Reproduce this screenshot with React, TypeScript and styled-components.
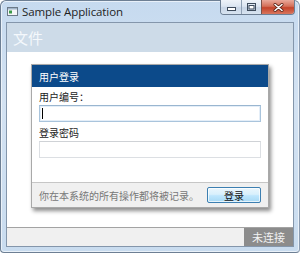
import * as React from 'react';
import styled, { createGlobalStyle } from 'styled-components';

const GlobalStyle = createGlobalStyle`
  html, body {
    margin: 0;
    padding: 0;
    width: 300px;
    height: 253px;
    overflow: hidden;
    background: #ffffff;
  }
  * {
    box-sizing: border-box;
  }
`;

const cjk = `"Noto Sans CJK SC", "Noto Sans", sans-serif`;

const Window = styled.div`
  width: 300px;
  height: 253px;
  display: flex;
  flex-direction: column;
  background: linear-gradient(180deg, #c6daef 0%, #d3e2f2 40%, #c9dcef 100%);
  border: 1px solid #6d7f94;
  border-right-color: #8a9bb0;
  border-radius: 6px 6px 4px 4px;
  box-shadow: inset 0 0 0 1px rgba(255, 255, 255, 0.6);
`;

const TitleBar = styled.div`
  height: 20px;
  flex-shrink: 0;
  display: flex;
  align-items: flex-start;
  padding-left: 6px;
  padding-right: 4px;
`;

const TitleLeft = styled.div`
  display: flex;
  align-items: center;
  gap: 4px;
  height: 20px;
  flex: 1;
`;

const Title = styled.span`
  font-family: "Open Sans", "Liberation Sans", sans-serif;
  font-size: 11.5px;
  color: #1e1e1e;
  letter-spacing: -0.1px;
`;

const Controls = styled.div`
  display: flex;
  height: 15px;
  border: 1px solid #6d7f94;
  border-top: none;
  border-radius: 0 0 4px 4px;
  overflow: hidden;
  margin-top: -1px;
`;

const CtrlButton = styled.div<{ $wide?: boolean; $close?: boolean }>`
  width: ${(p) => (p.$wide ? 33 : 20)}px;
  height: 100%;
  display: flex;
  align-items: center;
  justify-content: center;
  background: ${(p) =>
    p.$close
      ? 'linear-gradient(180deg, #e9a99b 0%, #d46f58 45%, #c4432a 55%, #d8765e 100%)'
      : 'linear-gradient(180deg, #eef3f9 0%, #dbe5f1 45%, #c7d5e6 55%, #d8e4f1 100%)'};
  border-left: ${(p) => (p.$wide ? '1px solid #7a5048' : '1px solid #8fa0b4')};
  &:first-child {
    border-left: none;
  }
`;

const Client = styled.div`
  flex: 1;
  margin: 1px 5px 5px 5px;
  border: 1px solid #8496ab;
  display: flex;
  flex-direction: column;
  background: #ffffff;
`;

const MenuBar = styled.div`
  height: 29px;
  flex-shrink: 0;
  background: #cddbe8;
  display: flex;
  align-items: center;
  padding-left: 6px;
  font-family: ${cjk};
  font-size: 15px;
  color: #f4f8fc;
`;

const Content = styled.div`
  flex: 1;
  display: flex;
  justify-content: center;
  align-items: flex-start;
  padding-top: 12px;
  background: #ffffff;
`;

const Dialog = styled.div`
  width: 238px;
  display: flex;
  flex-direction: column;
  background: #ffffff;
  border: 1px solid #a9a9a9;
  box-shadow: 2px 3px 4px rgba(0, 0, 0, 0.45);
`;

const DialogHeader = styled.div`
  height: 22px;
  background: #0c4a8a;
  display: flex;
  align-items: center;
  padding-left: 7px;
  font-family: ${cjk};
  font-size: 10px;
  color: #ffffff;
`;

const DialogBody = styled.div`
  display: flex;
  flex-direction: column;
  padding: 2px 7px 24px 7px;
`;

const Label = styled.div<{ $gap?: number }>`
  font-family: ${cjk};
  font-size: 10px;
  color: #1a1a1a;
  height: 16px;
  line-height: 16px;
  margin-top: ${(p) => p.$gap ?? 0}px;
`;

const Input = styled.div<{ $focused?: boolean }>`
  height: 17px;
  border: 1px solid ${(p) => (p.$focused ? '#a9c4dc' : '#dcdfe3')};
  border-top-color: ${(p) => (p.$focused ? '#9ab6d0' : '#cfd2d6')};
  box-shadow: ${(p) => (p.$focused ? 'inset 0 0 0 1px #e4eef8' : 'none')};
  display: flex;
  align-items: center;
  padding-left: 2px;
`;

const Caret = styled.span`
  width: 1px;
  height: 11px;
  background: #000000;
`;

const DialogFooter = styled.div`
  height: 25px;
  border-top: 1px solid #c6c6c6;
  background: #f0f0f0;
  display: flex;
  align-items: center;
  justify-content: space-between;
  padding: 0 7px;
`;

const Notice = styled.span`
  font-family: ${cjk};
  font-size: 10px;
  color: #777777;
`;

const LoginButton = styled.div`
  width: 54px;
  height: 16px;
  border: 1px solid #3c7fb1;
  border-radius: 2px;
  background: linear-gradient(180deg, #eaf6fd 0%, #d9f0fc 45%, #bee6fd 55%, #a7d9f5 100%);
  box-shadow: inset 0 0 0 1px rgba(255, 255, 255, 0.7);
  display: flex;
  align-items: center;
  justify-content: center;
  font-family: ${cjk};
  font-size: 10px;
  color: #111111;
`;

const StatusBar = styled.div`
  height: 19px;
  flex-shrink: 0;
  border-top: 1px solid #a3a3a3;
  background: #f0f0f0;
  display: flex;
  justify-content: flex-end;
`;

const Status = styled.div`
  width: 49px;
  background: #8c8c8c;
  display: flex;
  align-items: center;
  justify-content: center;
  font-family: ${cjk};
  font-size: 11px;
  color: #f2f2f2;
`;

function AppIcon() {
  return (
    <svg width="11" height="9" viewBox="0 0 11 9">
      <rect x="0.5" y="0.5" width="10" height="8" fill="#f4f6f8" stroke="#6b7a88" />
      <rect x="1" y="1" width="9" height="1.5" fill="#9fb3c8" />
      <rect x="2" y="3.5" width="3" height="3" fill="#3c9a4a" />
    </svg>
  );
}

function MinIcon() {
  return (
    <svg width="9" height="8" viewBox="0 0 9 8">
      <rect x="0.5" y="4.5" width="8" height="3" fill="#ffffff" stroke="#3d4b5c" />
    </svg>
  );
}

function MaxIcon() {
  return (
    <svg width="9" height="8" viewBox="0 0 9 8">
      <rect x="0.5" y="0.5" width="8" height="7" fill="none" stroke="#3d4b5c" />
      <rect x="2" y="2.5" width="5" height="3.5" fill="#ffffff" stroke="#3d4b5c" strokeWidth="1" />
    </svg>
  );
}

function CloseIcon() {
  return (
    <svg width="11" height="9" viewBox="0 0 11 9">
      <path d="M2 1.5 L9 7.5 M9 1.5 L2 7.5" stroke="#5a2418" strokeWidth="3" strokeLinecap="round" />
      <path d="M2 1.5 L9 7.5 M9 1.5 L2 7.5" stroke="#ffffff" strokeWidth="1.6" strokeLinecap="round" />
    </svg>
  );
}

export default function App() {
  return (
    <>
      <GlobalStyle />
      <Window>
        <TitleBar>
          <TitleLeft>
            <AppIcon />
            <Title>Sample Application</Title>
          </TitleLeft>
          <Controls>
            <CtrlButton>
              <MinIcon />
            </CtrlButton>
            <CtrlButton>
              <MaxIcon />
            </CtrlButton>
            <CtrlButton $wide $close>
              <CloseIcon />
            </CtrlButton>
          </Controls>
        </TitleBar>
        <Client>
          <MenuBar>文件</MenuBar>
          <Content>
            <Dialog>
              <DialogHeader>用户登录</DialogHeader>
              <DialogBody>
                <Label>用户编号：</Label>
                <Input $focused>
                  <Caret />
                </Input>
                <Label $gap={3}>登录密码</Label>
                <Input />
              </DialogBody>
              <DialogFooter>
                <Notice>你在本系统的所有操作都将被记录。</Notice>
                <LoginButton>登录</LoginButton>
              </DialogFooter>
            </Dialog>
          </Content>
          <StatusBar>
            <Status>未连接</Status>
          </StatusBar>
        </Client>
      </Window>
    </>
  );
}
